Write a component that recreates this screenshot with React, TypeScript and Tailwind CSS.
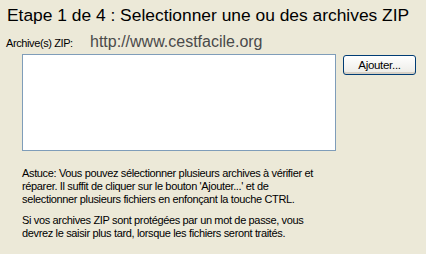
import React from 'react';

const App: React.FC = () => {
  return (
    <div className="w-[426px] h-[254px] bg-[#ECE9D8] overflow-hidden font-['Liberation_Sans',Arial,sans-serif] text-black">
      {/* Title */}
      <h1 className="pt-[5px] pl-[7px] text-[17.4px] leading-[20px] font-normal whitespace-nowrap">
        Etape 1 de 4 : Selectionner une ou des archives ZIP
      </h1>

      {/* Label + site */}
      <div className="flex items-baseline mt-[8px] h-[17px]">
        <span className="pl-[6px] w-[90px] text-[11px] leading-[13px] tracking-[-0.4px]">Archive(s) ZIP:</span>
        <span className="text-[16px] leading-[17px] text-[#4a4a4a]">http://www.cestfacile.org</span>
      </div>

      {/* List + button */}
      <div className="flex items-start ml-[22px] mt-[4px]">
        <div className="w-[314px] h-[97px] bg-white border border-[#7F9DB9]"></div>
        <button className="ml-[7px] mt-[1px] w-[73px] h-[20px] rounded-[3px] border border-[#003C74] bg-gradient-to-b from-white to-[#ECEBE6] text-[11.5px] leading-[12px] tracking-[-0.3px] shadow-[inset_0_-2px_0_#D6D0C5]">
          Ajouter...
        </button>
      </div>

      {/* Help text */}
      <div className="ml-[22px] mt-[16px] text-[11px] leading-[13px] tracking-[-0.35px]">
        <p>
          Astuce: Vous pouvez sélectionner plusieurs archives à vérifier et
          <br />
          réparer. Il suffit de cliquer sur le bouton 'Ajouter...' et de
          <br />
          selectionner plusieurs fichiers en enfonçant la touche CTRL.
        </p>
        <p className="mt-[8px]">
          Si vos archives ZIP sont protégées par un mot de passe, vous
          <br />
          devrez le saisir plus tard, lorsque les fichiers seront traités.
        </p>
      </div>
    </div>
  );
};

export default App;
